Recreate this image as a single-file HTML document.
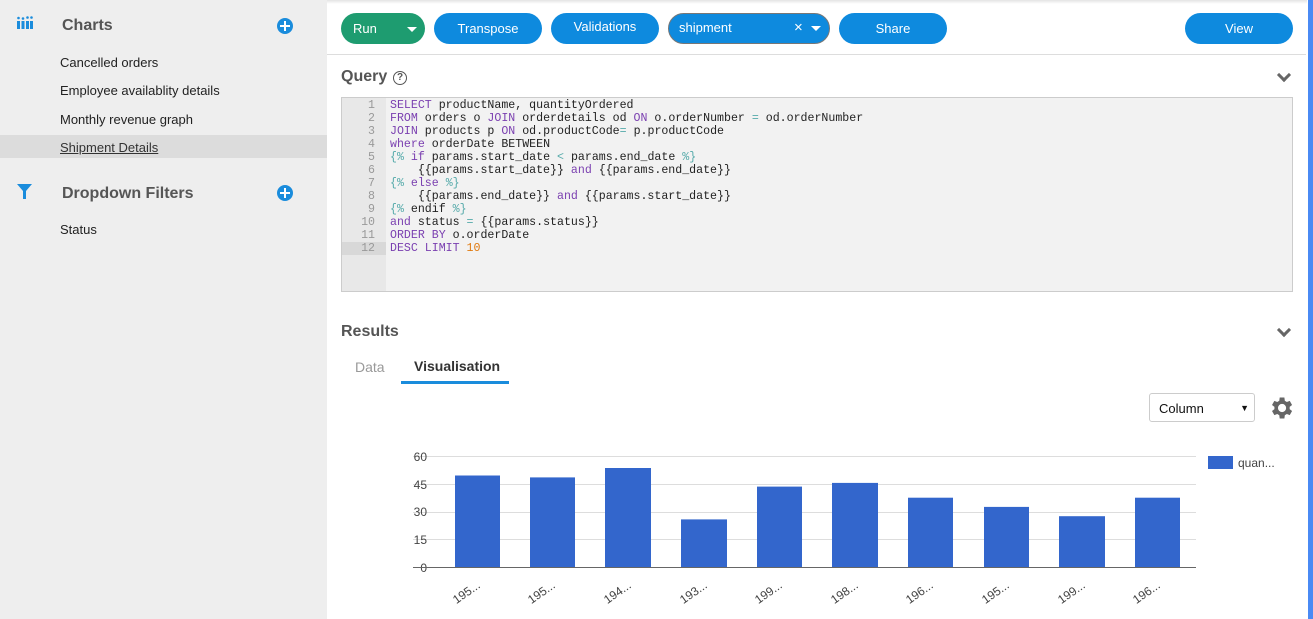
<!DOCTYPE html>
<html><head><meta charset="utf-8"><style>
*{box-sizing:border-box;margin:0;padding:0}
body{width:1313px;height:619px;overflow:hidden;font-family:"Liberation Sans",sans-serif;background:#fff;position:relative}
#side{position:absolute;left:0;top:0;width:327px;height:619px;background:#eeeeee}
.h{position:absolute;font-weight:bold;font-size:16px;color:#555}
.it{position:absolute;left:60px;font-size:13px;color:#222}
.plus{position:absolute;width:16px;height:16px;border-radius:50%;background:#1a8cdc}
.plus:before,.plus:after{content:"";position:absolute;background:#fff;left:3px;top:7px;width:10px;height:2px}
.plus:after{left:7px;top:3px;width:2px;height:10px}
.btn{position:absolute;top:13px;height:31px;border-radius:16px;background:#0e8ade;color:#fff;font-size:13px;text-align:center;line-height:31px}
#code{position:absolute;left:341px;top:97px;width:952px;height:195px;background:#f2f2f2;border:1px solid #ccc;font-family:"Liberation Mono",monospace;font-size:11.6px;line-height:13px;color:#222}
#gut{position:absolute;left:0;top:0;width:44px;height:193px;background:#e8e8e8;color:#999;text-align:right}
#gut div{padding-right:11px}
#src{position:absolute;left:48px;top:1px;white-space:pre}
#gut{padding-top:1px}
.k{color:#7a3fb0}.o{color:#5aa}.n{color:#e07a10}
.chev{position:absolute;width:10px;height:10px;border-right:3px solid #666;border-bottom:3px solid #666;transform:rotate(45deg)}
</style></head><body>
<div id="side">
 <svg style="position:absolute;left:17px;top:16px" width="16" height="14"><g fill="#1a8cdc"><rect x="0" y="5" width="3" height="8"/><rect x="4.5" y="5" width="3" height="8"/><rect x="9" y="5" width="3" height="8"/><rect x="13" y="5" width="3" height="8"/><circle cx="1.5" cy="2" r="1.3"/><circle cx="6" cy="2.5" r="1.3"/><circle cx="10.5" cy="1.5" r="1.3"/><circle cx="14.5" cy="1.5" r="1.3"/></g></svg>
 <div class="h" style="left:62px;top:17px">Charts</div>
 <div class="plus" style="left:277px;top:18px"></div>
 <div class="it" style="top:55px">Cancelled orders</div>
 <div class="it" style="top:83px">Employee availablity details</div>
 <div class="it" style="top:112px">Monthly revenue graph</div>
 <div style="position:absolute;left:0;top:135px;width:327px;height:23px;background:#dcdcdc"></div>
 <div class="it" style="top:140px;text-decoration:underline;color:#333">Shipment Details</div>
 <svg style="position:absolute;left:17px;top:184px" width="15" height="15"><path d="M0 0H15L9 7V15H6V7Z" fill="#1a8cdc"/></svg>
 <div class="h" style="left:62px;top:185px">Dropdown Filters</div>
 <div class="plus" style="left:277px;top:185px"></div>
 <div class="it" style="top:222px">Status</div>
</div>
<div style="position:absolute;left:327px;top:0;width:980px;height:4px;background:linear-gradient(#e4e4e4,#fff)"></div>
<div style="position:absolute;left:1308px;top:0;width:5px;height:619px;background:#4a8af4"></div>
<div style="position:absolute;left:327px;top:54px;width:979px;height:1px;background:#ddd"></div>
<div class="btn" style="left:341px;width:84px;background:#1e9c70;text-align:left;padding-left:12px">Run<span style="position:absolute;left:66px;top:14px;border:5px solid transparent;border-top-color:#fff;border-bottom:0"></span></div>
<div class="btn" style="left:434px;width:108px">Transpose</div>
<div class="btn" style="left:551px;width:108px;line-height:28px">Validations</div>
<div class="btn" style="left:668px;width:162px;text-align:left;padding-left:10px;line-height:28px;border:1px solid #777">shipment<span style="position:absolute;left:125px;top:0;font-size:15px">×</span><span style="position:absolute;left:142px;top:12px;border:5px solid transparent;border-top-color:#fff;border-bottom:0"></span></div>
<div class="btn" style="left:839px;width:108px">Share</div>
<div class="btn" style="left:1185px;width:108px">View</div>
<div class="h" style="left:341px;top:68px">Query</div>
<div style="position:absolute;left:393px;top:71px;width:14px;height:14px;border:1.5px solid #555;border-radius:50%;font-size:10px;font-weight:bold;color:#555;text-align:center;line-height:11px">?</div>
<div class="chev" style="left:1279px;top:70px"></div>
<div id="code"><div id="gut"><div>1</div><div>2</div><div>3</div><div>4</div><div>5</div><div>6</div><div>7</div><div>8</div><div>9</div><div>10</div><div>11</div><div style="background:#d8d8d8">12</div></div>
<div id="src"><span class="k">SELECT</span> productName, quantityOrdered
<span class="k">FROM</span> orders o <span class="k">JOIN</span> orderdetails od <span class="k">ON</span> o.orderNumber <span class="o">=</span> od.orderNumber
<span class="k">JOIN</span> products p <span class="k">ON</span> od.productCode<span class="o">=</span> p.productCode
<span class="k">where</span> orderDate BETWEEN
<span class="o">{%</span> <span class="k">if</span> params.start_date <span class="o">&lt;</span> params.end_date <span class="o">%}</span>
    {{params.start_date}} <span class="k">and</span> {{params.end_date}}
<span class="o">{%</span> <span class="k">else</span> <span class="o">%}</span>
    {{params.end_date}} <span class="k">and</span> {{params.start_date}}
<span class="o">{%</span> endif <span class="o">%}</span>
<span class="k">and</span> status <span class="o">=</span> {{params.status}}
<span class="k">ORDER BY</span> o.orderDate
<span class="k">DESC LIMIT</span> <span class="n">10</span></div></div>
<div class="h" style="left:341px;top:323px">Results</div>
<div class="chev" style="left:1279px;top:325px"></div>
<div style="position:absolute;left:355px;top:359px;font-size:14px;color:#999">Data</div>
<div style="position:absolute;left:414px;top:358px;font-size:14px;color:#333;font-weight:bold">Visualisation</div>
<div style="position:absolute;left:401px;top:381px;width:108px;height:3px;background:#1a8cdc"></div>
<div style="position:absolute;left:1149px;top:393px;width:106px;height:29px;border:1px solid #ccc;border-radius:3px;font-size:13px;padding:7px 9px;color:#111">Column<span style="position:absolute;right:5px;top:9px;font-size:9px">▼</span></div>
<svg style="position:absolute;left:1267px;top:394px" width="28" height="28" viewBox="0 0 24 24"><path fill="#666" d="M19.4 13a7.5 7.5 0 000-2l2.1-1.6-2-3.5-2.5 1a7 7 0 00-1.7-1L14.9 3h-4l-.4 2.9a7 7 0 00-1.7 1l-2.5-1-2 3.5L6.4 11a7.5 7.5 0 000 2l-2.1 1.6 2 3.5 2.5-1a7 7 0 001.7 1l.4 2.9h4l.4-2.9a7 7 0 001.7-1l2.5 1 2-3.5zM12.9 15.5a3.5 3.5 0 110-7 3.5 3.5 0 010 7z"/></svg>
<svg style="position:absolute;left:0;top:0" width="1313" height="619" font-family="Liberation Sans,sans-serif" font-size="12" fill="#444">
<g stroke="#ddd"><line x1="413" y1="456.5" x2="1196" y2="456.5"/><line x1="413" y1="484.5" x2="1196" y2="484.5"/><line x1="413" y1="512.5" x2="1196" y2="512.5"/><line x1="413" y1="539.5" x2="1196" y2="539.5"/></g>
<g text-anchor="end"><text x="427" y="461">60</text><text x="427" y="489">45</text><text x="427" y="516">30</text><text x="427" y="544">15</text><text x="427" y="572">0</text></g>
<g fill="#3366cc">
<rect x="455" y="475.5" width="45" height="92"/><rect x="530" y="477.4" width="45" height="90"/><rect x="605" y="468" width="46" height="99.5"/><rect x="681" y="519.4" width="46" height="48"/><rect x="757" y="486.6" width="45" height="81"/><rect x="832" y="482.9" width="46" height="85"/><rect x="908" y="497.7" width="45" height="70"/><rect x="984" y="506.9" width="45" height="61"/><rect x="1059" y="516.2" width="46" height="51.5"/><rect x="1135" y="497.7" width="45" height="70"/>
<rect x="1208" y="456" width="25" height="13"/></g>
<line x1="413" y1="567.5" x2="1196" y2="567.5" stroke="#666"/>
<text x="1238" y="467">quan...</text>
<g font-size="12">
<text transform="translate(481,587) rotate(-35)" text-anchor="end">195...</text>
<text transform="translate(556,587) rotate(-35)" text-anchor="end">195...</text>
<text transform="translate(632,587) rotate(-35)" text-anchor="end">194...</text>
<text transform="translate(708,587) rotate(-35)" text-anchor="end">193...</text>
<text transform="translate(783,587) rotate(-35)" text-anchor="end">199...</text>
<text transform="translate(859,587) rotate(-35)" text-anchor="end">198...</text>
<text transform="translate(934,587) rotate(-35)" text-anchor="end">196...</text>
<text transform="translate(1010,587) rotate(-35)" text-anchor="end">195...</text>
<text transform="translate(1086,587) rotate(-35)" text-anchor="end">199...</text>
<text transform="translate(1161,587) rotate(-35)" text-anchor="end">196...</text>
</g></svg>
</body></html>
